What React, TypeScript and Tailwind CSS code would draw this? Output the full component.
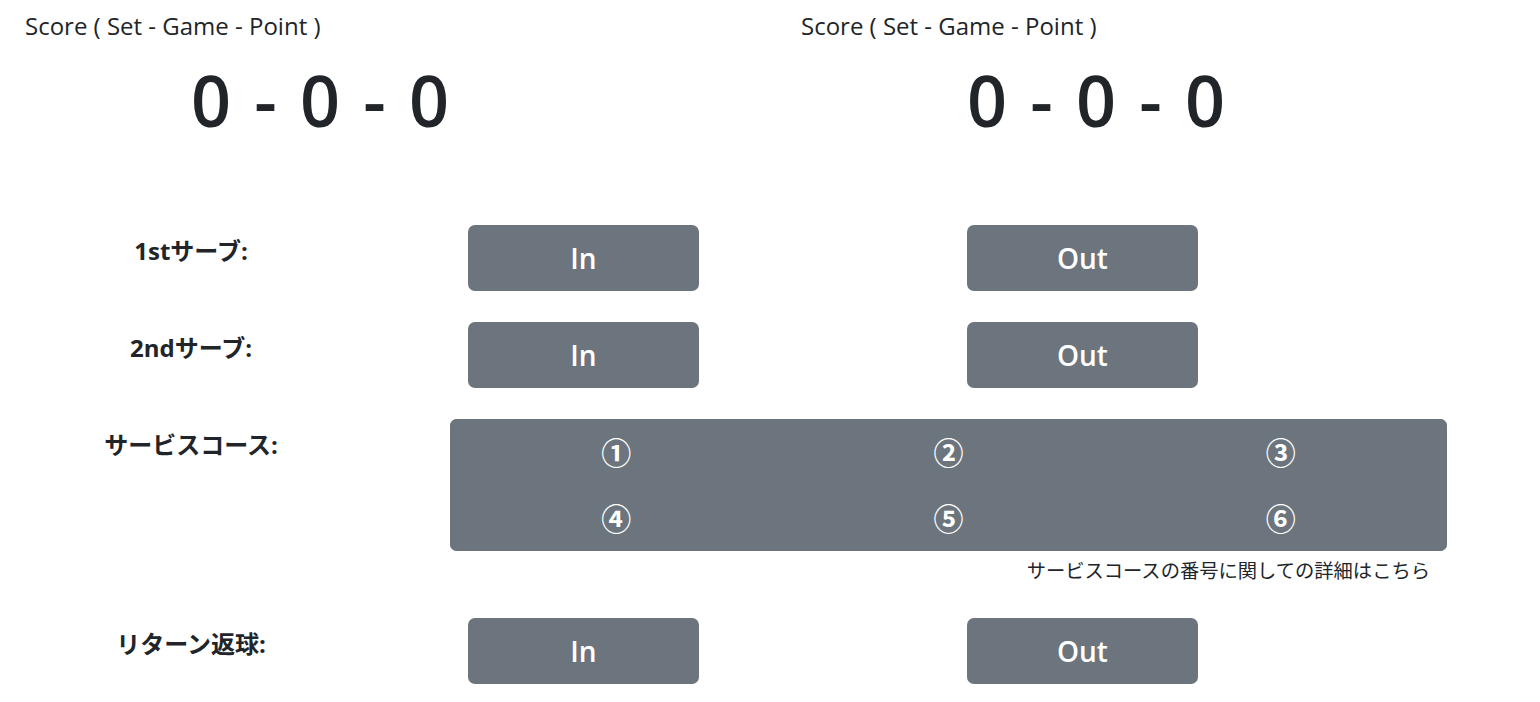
import React from 'react';

const latin = "font-['Open_Sans','Noto_Sans_CJK_JP',sans-serif]";

function ScoreBlock() {
  return (
    <div className="w-[776px] shrink-0">
      <p className="pl-[25px] pt-[8px] text-[24px] leading-[36px] text-[#212529]">
        Score ( Set - Game - Point )
      </p>
      <div className="w-[640px] text-center text-[70px] leading-[80px] font-semibold [word-spacing:5px] text-[#212529] mt-[16px]">
        0 - 0 - 0
      </div>
    </div>
  );
}

function Row({ label, children }: { label: string; children: React.ReactNode }) {
  return (
    <div className="flex items-start">
      <div className="w-[382px] shrink-0 text-center pt-[8px] text-[24px] leading-[36px] font-bold text-[#212529]">
        {label}
      </div>
      {children}
    </div>
  );
}

function Btn({ children, className }: { children: React.ReactNode; className?: string }) {
  return (
    <button
      className={
        'h-[66px] rounded-[7px] bg-[#6c757d] text-white text-[28px] font-semibold flex items-center justify-center ' +
        (className ?? '')
      }
    >
      {children}
    </button>
  );
}

function InOut() {
  return (
    <div className="flex">
      <Btn className="ml-[86px] w-[231px]">In</Btn>
      <Btn className="ml-[268px] w-[231px]">Out</Btn>
    </div>
  );
}

export default function App() {
  const courses = ['①', '②', '③', '④', '⑤', '⑥'];
  return (
    <div className={`min-h-screen bg-white ${latin}`}>
      {/* Scores */}
      <div className="flex h-[225px]">
        <ScoreBlock />
        <ScoreBlock />
      </div>

      <div className="flex flex-col">
        <Row label="1stサーブ:">
          <InOut />
        </Row>

        <div className="mt-[31px]">
          <Row label="2ndサーブ:">
            <InOut />
          </Row>
        </div>

        <div className="mt-[31px]">
          <Row label="サービスコース:">
            <div className="ml-[68px] w-[997px]">
              <div className="grid grid-cols-3 rounded-[7px] overflow-hidden bg-[#6c757d]">
                {courses.map((c) => (
                  <button
                    key={c}
                    className="h-[66px] bg-[#6c757d] text-white text-[30px] font-semibold flex items-center justify-center"
                  >
                    {c}
                  </button>
                ))}
              </div>
              <p className="text-right pr-[17px] pt-[5px] text-[19.3px] leading-[30px] text-[#212529]">
                サービスコースの番号に関しての詳細はこちら
              </p>
            </div>
          </Row>
        </div>

        <div className="mt-[32px]">
          <Row label="リターン返球:">
            <InOut />
          </Row>
        </div>
      </div>
    </div>
  );
}
